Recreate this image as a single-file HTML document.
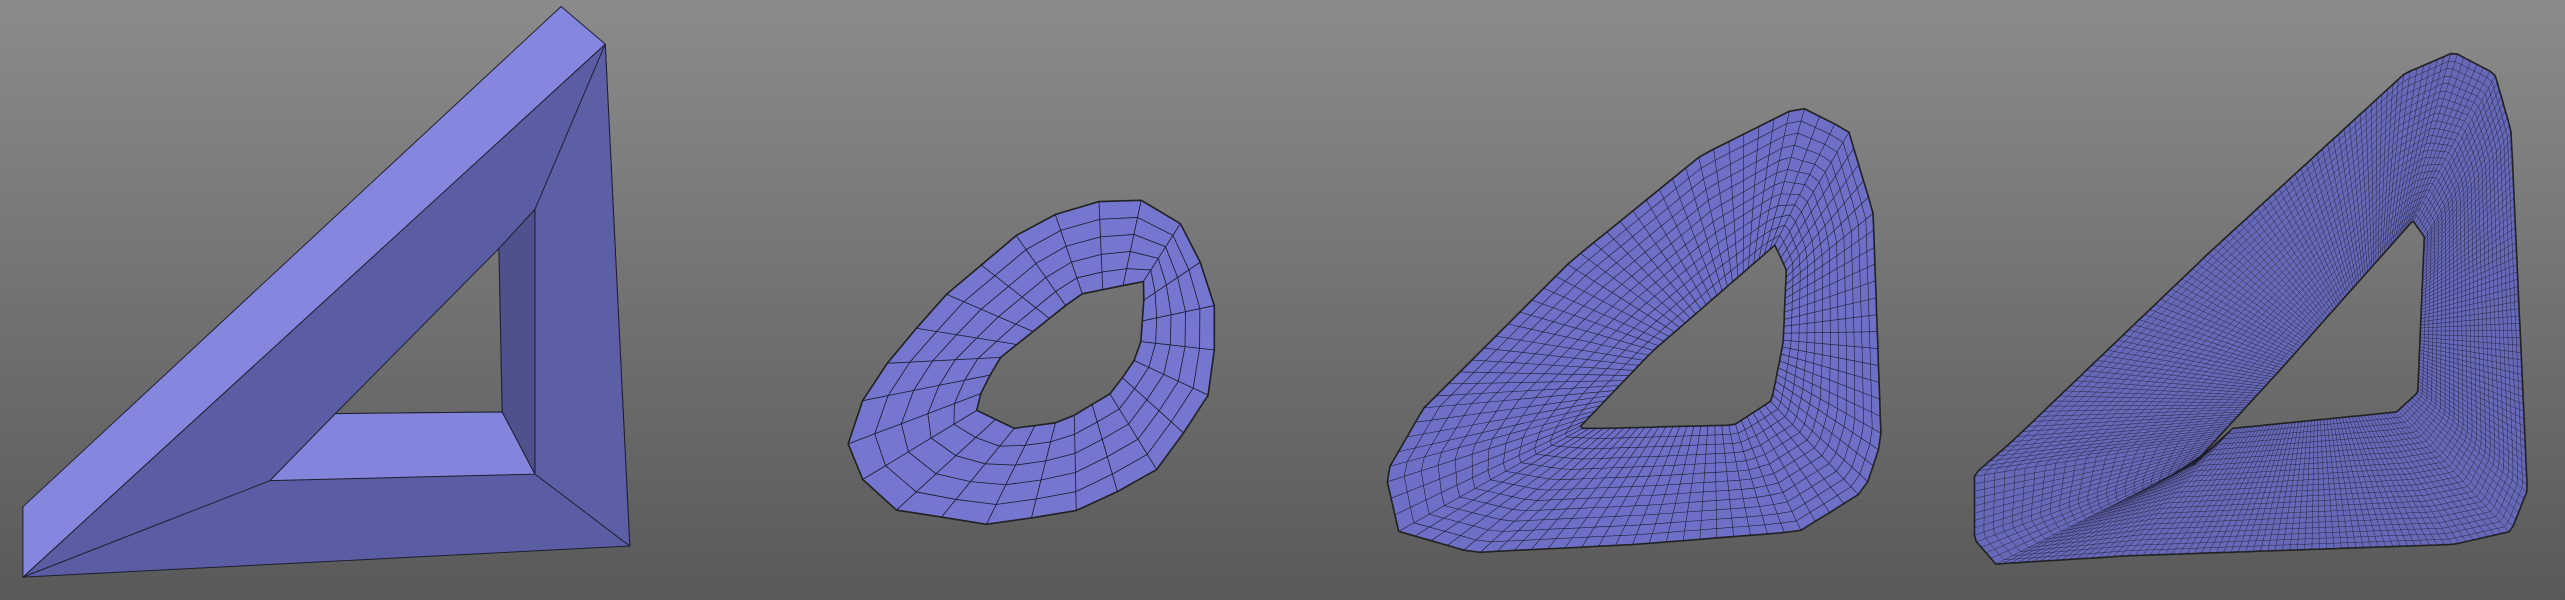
<!DOCTYPE html>
<html><head><meta charset="utf-8"><style>
html,body{margin:0;padding:0;width:2565px;height:600px;overflow:hidden}
body{background:linear-gradient(#8a8a8a,#5a5a5a)}
svg{display:block}
</style></head><body>
<svg id="s" width="2565" height="600" viewBox="0 0 1568 367" preserveAspectRatio="none">
<defs>
<linearGradient id="bg" x1="0" y1="0" x2="0" y2="1"><stop offset="0" stop-color="#8b8b8b"/><stop offset="1" stop-color="#595959"/></linearGradient>
</defs>
<rect width="1568" height="367" fill="url(#bg)"/>
<g stroke="#1e1e30" stroke-width="0.6" stroke-linejoin="round">
<path d="M14,353 L370,27 L385,334 Z M205,253 L307,252 L305,152 Z" fill="#5b5da4" fill-rule="evenodd"/>
<polygon points="370,27 385,334 327,290 327,128" fill="#5c5ea6"/>
<polygon points="14,310 343,4 370,27 14,353" fill="#8587df"/>
<polygon points="165,294 205,253 307,252 327,290" fill="#8385dc"/>
<polygon points="305,152 327,128 327,290 307,252" fill="#4f518c"/>
<line x1="165" y1="294" x2="14" y2="353"/>
</g>
<g id="meshes"></g>
</svg>
<script>
function resample(p,n){var L=[0],t=0;for(var i=0;i<p.length;i++){var a=p[i],b=p[(i+1)%p.length];t+=Math.hypot(b[0]-a[0],b[1]-a[1]);L.push(t);}
var out=[];for(var k=0;k<n;k++){var d=t*k/n,j=0;while(L[j+1]<d)j++;var a=p[j],b=p[(j+1)%p.length],f=(d-L[j])/(L[j+1]-L[j]||1);out.push([a[0]+(b[0]-a[0])*f,a[1]+(b[1]-a[1])*f]);}return out;}
function pts(p){return p.map(function(q){return q[0].toFixed(1)+","+q[1].toFixed(1)}).join(" ");}
function align(O,I){var n=O.length,best=0,bs=1e18;for(var s=0;s<n;s++){var sum=0;for(var k=0;k<n;k++){var q=I[(k+s)%n];sum+=Math.hypot(q[0]-O[k][0],q[1]-O[k][1]);}if(sum<bs){bs=sum;best=s;}}
return O.map(function(_,k){return I[(k+best)%n];});}
var shapes=[
{o:[[548,312],[515,282],[530,237],[575,183],[632,135],[690,118],[727,140],[745,195],[738,245],[705,290],[660,312],[605,321]],
 i:[[620,262],[595,250],[610,220],[660,180],[700,172],[697,215],[680,240],[650,258]],n:24,r:5,fill:"#7476d0",w:0.5},
{o:[[855,325],[847,290],[870,250],[960,160],[1040,95],[1100,65],[1130,80],[1145,130],[1150,270],[1140,300],[1100,325],[1000,333],[900,338]],
 i:[[980,262],[965,262],[1010,215],[1085,150],[1092,165],[1090,210],[1083,245],[1060,260]],n:90,r:12,fill:"#6e70c8",w:0.35},
{o:[[1220,345],[1207,330],[1207,290],[1230,270],[1350,155],[1470,45],[1500,32],[1525,45],[1535,80],[1545,300],[1535,325],[1500,333],[1300,340]],
 i:[[1365,262],[1340,285],[1395,225],[1475,135],[1482,145],[1478,240],[1465,252]],n:240,r:24,fill:"#6668b8",w:0.25}
];
var g=document.getElementById("meshes"),h="";
shapes.forEach(function(s){
 var O=resample(s.o,s.n),I=align(O,resample(s.i,s.n));
 h+='<path d="M'+pts(O).replace(/ /g," L")+'Z M'+pts(I).replace(/ /g," L")+'Z" fill="'+s.fill+'" fill-rule="evenodd" stroke="#222" stroke-width="1"/>';
 for(var k=0;k<s.n;k++)h+='<line x1="'+O[k][0].toFixed(1)+'" y1="'+O[k][1].toFixed(1)+'" x2="'+I[k][0].toFixed(1)+'" y2="'+I[k][1].toFixed(1)+'" stroke="#1a1a2a" stroke-width="'+s.w+'"/>';
 for(var r=1;r<s.r;r++){var f=r/s.r,R=O.map(function(q,k){return[q[0]+(I[k][0]-q[0])*f,q[1]+(I[k][1]-q[1])*f]});
  h+='<polygon points="'+pts(R)+'" fill="none" stroke="#1a1a2a" stroke-width="'+s.w+'"/>';}
});
g.innerHTML=h;
</script>
</body></html>
